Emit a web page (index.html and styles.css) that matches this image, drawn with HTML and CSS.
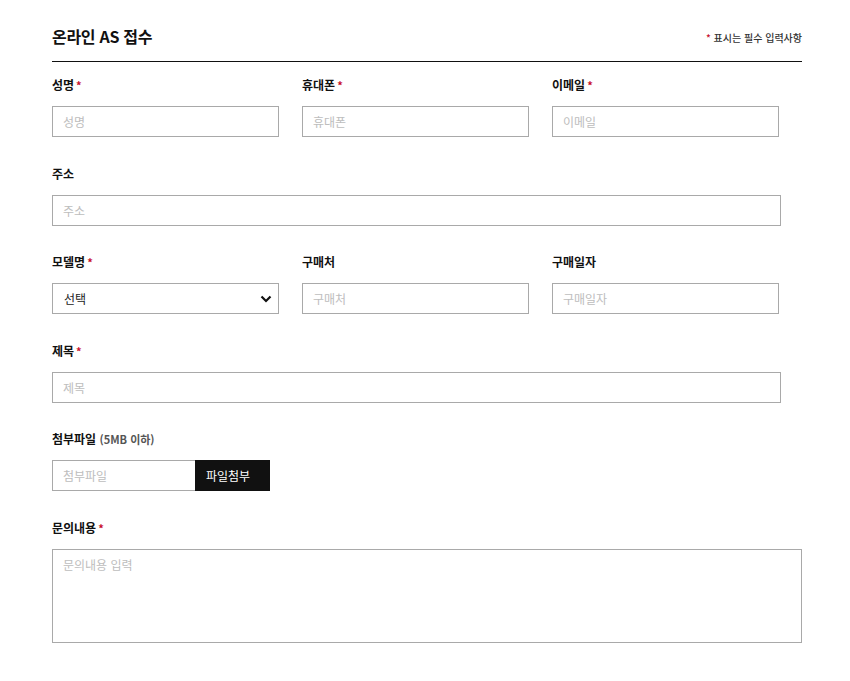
FILE: index.html
```html
<!DOCTYPE html>
<html lang="ko">
<head>
<meta charset="utf-8">
<link rel="stylesheet" href="styles.css">
</head>
<body>
<div class="wrap">
  <div class="head">
    <h2 class="title">온라인 AS 접수</h2>
    <p class="note"><span class="req">*</span> 표시는 필수 입력사항</p>
  </div>
  <div class="form">
    <div class="row three">
      <div class="field">
        <div class="label">성명<span class="req">*</span></div>
        <input class="inp" type="text" placeholder="성명">
      </div>
      <div class="field">
        <div class="label">휴대폰<span class="req">*</span></div>
        <input class="inp" type="text" placeholder="휴대폰">
      </div>
      <div class="field">
        <div class="label">이메일<span class="req">*</span></div>
        <input class="inp" type="text" placeholder="이메일">
      </div>
    </div>
    <div class="row">
      <div class="field">
        <div class="label">주소</div>
        <input class="inp wide" type="text" placeholder="주소">
      </div>
    </div>
    <div class="row three">
      <div class="field">
        <div class="label">모델명<span class="req">*</span></div>
        <div class="select">
          <span>선택</span>
          <svg class="chev" width="12" height="8" viewBox="0 0 12 8"><path d="M1.5 1.5 L6 6 L10.5 1.5" fill="none" stroke="#111" stroke-width="2.2"/></svg>
        </div>
      </div>
      <div class="field">
        <div class="label">구매처</div>
        <input class="inp" type="text" placeholder="구매처">
      </div>
      <div class="field">
        <div class="label">구매일자</div>
        <input class="inp" type="text" placeholder="구매일자">
      </div>
    </div>
    <div class="row">
      <div class="field">
        <div class="label">제목<span class="req">*</span></div>
        <input class="inp wide" type="text" placeholder="제목">
      </div>
    </div>
    <div class="row">
      <div class="field">
        <div class="label">첨부파일 <span class="sub">(5MB 이하)</span></div>
        <div class="file">
          <input class="inp fileinp" type="text" placeholder="첨부파일">
          <button class="btn" type="button">파일첨부</button>
        </div>
      </div>
    </div>
    <div class="row">
      <div class="field">
        <div class="label">문의내용<span class="req">*</span></div>
        <textarea class="area" placeholder="문의내용 입력"></textarea>
      </div>
    </div>
  </div>
</div>
</body>
</html>
```
FILE: styles.css
```css
* { box-sizing: border-box; }
body {
  margin: 0;
  background: #fff;
  font-family: "Noto Sans CJK KR", "Noto Sans", sans-serif;
  color: #111;
}
.wrap {
  width: 750px;
  margin-left: 52px;
}
.head {
  display: flex;
  justify-content: space-between;
  align-items: flex-end;
  padding-top: 24px;
  padding-bottom: 13px;
  border-bottom: 1px solid #111;
}
.title {
  margin: 0;
  font-size: 16px;
  line-height: 24px;
  font-weight: 700;
  letter-spacing: -0.3px;
}
.note {
  margin: 0 0 3px;
  font-size: 10px;
  line-height: 14px;
  color: #333;
  font-weight: 500;
}
.req {
  color: #c8102e;
  margin-left: 2px;
  font-size: 11px;
}
.note .req { margin-left: 0; font-size: 10px; }
.form {
  padding-top: 15px;
}
.row {
  margin-bottom: 28.6px;
}
.row.three {
  display: grid;
  grid-template-columns: 250px 250px 250px;
}
.label {
  font-size: 12px;
  line-height: 16px;
  font-weight: 700;
  margin-bottom: 13px;
}
.sub {
  font-size: 11px;
  color: #555;
}
.inp {
  display: block;
  width: 227px;
  height: 31px;
  border: 1px solid #a9a9a9;
  padding: 0 10px;
  font-family: inherit;
  font-size: 12px;
  color: #333;
  background: #fff;
  outline: none;
}
.inp::placeholder, .area::placeholder {
  color: #bdbdbd;
}
.inp.wide { width: 729px; }
.select {
  width: 227px;
  height: 31px;
  border: 1px solid #a9a9a9;
  display: flex;
  align-items: center;
  justify-content: space-between;
  padding: 0 6px 0 11px;
  font-size: 12px;
  color: #222;
}
.chev { display: block; }
.file {
  display: flex;
  height: 31px;
}
.fileinp {
  width: 143px;
  border-right: none;
}
.btn {
  width: 75px;
  height: 31px;
  border: none;
  background: #111;
  color: #fff;
  font-family: inherit;
  font-size: 12px;
  padding: 0;
  text-align: left;
  padding-left: 11px;
}
.area {
  display: block;
  width: 750px;
  height: 94px;
  border: 1px solid #a9a9a9;
  padding: 6px 10px;
  font-family: inherit;
  font-size: 12px;
  resize: none;
  outline: none;
}
```
